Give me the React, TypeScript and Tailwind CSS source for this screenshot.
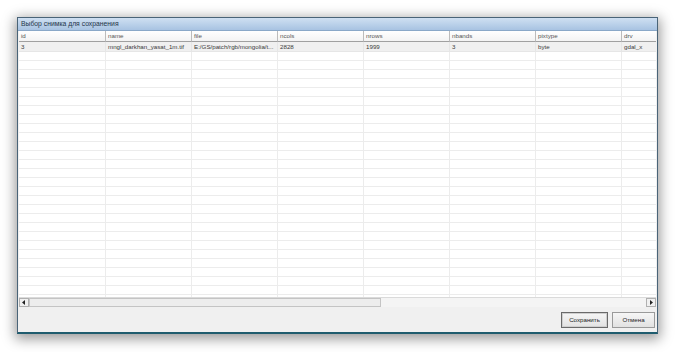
import React from "react";

const cols = ["id", "name", "file", "ncols", "nrows", "nbands", "pixtype", "drv"];
const widths = [87, 86, 86, 86, 86, 86, 86, 36];
const row1 = ["3", "mngl_darkhan_yasat_1m.tif", "E:/GS/patch/rgb/mongolia/t...", "2828", "1999", "3", "byte", "gdal_x"];

export default function App() {
  const emptyRows = Array.from({ length: 28 });
  return (
    <div
      className="w-[676px] h-[352px] bg-white pl-[17px] pt-[17px] overflow-hidden"
      style={{ fontFamily: '"Liberation Sans", Arial, sans-serif' }}
    >
      <div className="w-[641px] h-[317px] flex flex-col border border-[#4a6478] border-b-[#1f5c6e] border-b-2 bg-[#f0f0f0] shadow-[0_3px_12px_2px_rgba(0,0,0,0.4)]">
        <div className="h-[13px] shrink-0 flex items-center pl-[3px] bg-gradient-to-b from-[#cfe0f2] to-[#a8c3e2] border-b border-[#8aa8c8] text-[6.8px] text-[#24364a] leading-none">
          Выбор снимка для сохранения
        </div>
        <div className="flex-1 flex flex-col px-[1px] min-h-0">
          <div className="flex-1 flex flex-col bg-white overflow-hidden min-h-0">
            <div className="flex h-[11px] shrink-0">
              {cols.map((c, i) => (
                <div
                  key={c}
                  style={{ width: widths[i] }}
                  className="shrink-0 border-r border-b border-[#bcbcbc] border-b-[#a0a0a0] bg-gradient-to-b from-white to-[#f3f3f3] text-[6.2px] text-[#555] leading-[10px] pl-[2px] overflow-hidden whitespace-nowrap"
                >
                  {c}
                </div>
              ))}
            </div>
            <div className="flex h-[10px] shrink-0 bg-[#f0f0f0]">
              {row1.map((c, i) => (
                <div
                  key={i}
                  style={{ width: widths[i] }}
                  className="shrink-0 border-r border-b border-[#e6e6e6] text-[6.2px] text-[#3a3a3a] leading-[9px] pl-[2px] overflow-hidden whitespace-nowrap"
                >
                  {c}
                </div>
              ))}
            </div>
            {emptyRows.map((_, r) => (
              <div key={r} className="flex h-[9px] shrink-0">
                {widths.map((w, i) => (
                  <div
                    key={i}
                    style={{ width: w }}
                    className="shrink-0 border-r border-b border-[#ececec]"
                  />
                ))}
              </div>
            ))}
          </div>
          <div className="h-[10px] shrink-0 flex bg-[#f4f4f4] border-t border-[#dadada]">
            <div className="w-[10px] h-[9px] flex items-center justify-center border border-[#b0b0b0] bg-[#f0f0f0]">
              <svg width="4" height="5" viewBox="0 0 4 5"><path d="M3 0 L0 2.5 L3 5 Z" fill="#222" /></svg>
            </div>
            <div className="w-[352px] h-[9px] border border-[#c4c4c4] bg-[#ededed]" />
            <div className="flex-1" />
            <div className="w-[10px] h-[9px] flex items-center justify-center border border-[#b0b0b0] bg-[#f0f0f0]">
              <svg width="4" height="5" viewBox="0 0 4 5"><path d="M1 0 L4 2.5 L1 5 Z" fill="#222" /></svg>
            </div>
          </div>
        </div>
        <div className="h-[25px] shrink-0 flex items-center justify-end gap-[4px] pr-[2px]">
          <div className="w-[47px] h-[16px] flex items-center justify-center border border-[#6a6a6a] bg-gradient-to-b from-[#f6f6f6] to-[#e2e2e2] text-[6.2px] text-[#222] shadow-[inset_0_0_0_1px_#cfcfcf]">
            Сохранить
          </div>
          <div className="w-[43px] h-[16px] flex items-center justify-center border border-[#9a9a9a] bg-gradient-to-b from-[#f6f6f6] to-[#e2e2e2] text-[6.2px] text-[#222]">
            Отмена
          </div>
        </div>
      </div>
    </div>
  );
}
